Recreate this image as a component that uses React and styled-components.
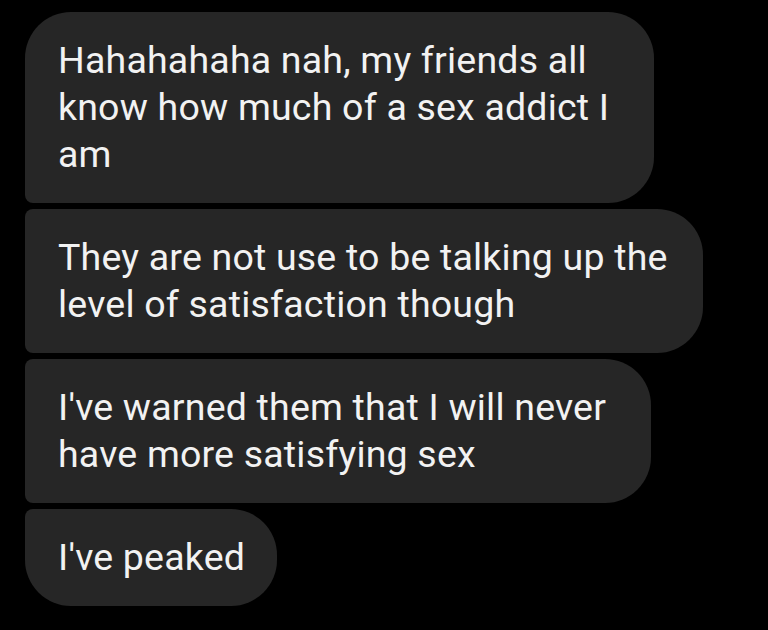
import React from "react";
import styled, { createGlobalStyle } from "styled-components";

const Global = createGlobalStyle`
  html, body { margin: 0; padding: 0; background: #000; }
  body { width: 768px; height: 630px; overflow: hidden; }
`;

const Thread = styled.div`
  display: flex;
  flex-direction: column;
  align-items: flex-start;
  gap: 6px;
  padding: 12px 0 0 25px;
  background: #000;
  min-height: 630px;
  box-sizing: border-box;
  font-family: Roboto, "Noto Sans", sans-serif;
`;

const BIG = 46;
const SMALL = 8;

const Bubble = styled.div`
  box-sizing: border-box;
  width: ${(p) => p.$w}px;
  padding: 25px 10px 25px 33px;
  background: #262626;
  color: #f2f2f2;
  font-size: 37.5px;
  letter-spacing: 0.2px;
  line-height: 47px;
  border-radius: ${(p) => (p.$first ? BIG : SMALL)}px ${BIG}px ${BIG}px
    ${(p) => (p.$last ? BIG : SMALL)}px;
`;

export default function App() {
  return (
    <>
      <Global />
      <Thread>
        <Bubble $w={629} $first>
          Hahahahaha nah, my friends all know how much of a sex addict I am
        </Bubble>
        <Bubble $w={678}>
          They are not use to be talking up the level of satisfaction though
        </Bubble>
        <Bubble $w={626}>
          I've warned them that I will never have more satisfying sex
        </Bubble>
        <Bubble $w={252} $last>
          I've peaked
        </Bubble>
      </Thread>
    </>
  );
}
